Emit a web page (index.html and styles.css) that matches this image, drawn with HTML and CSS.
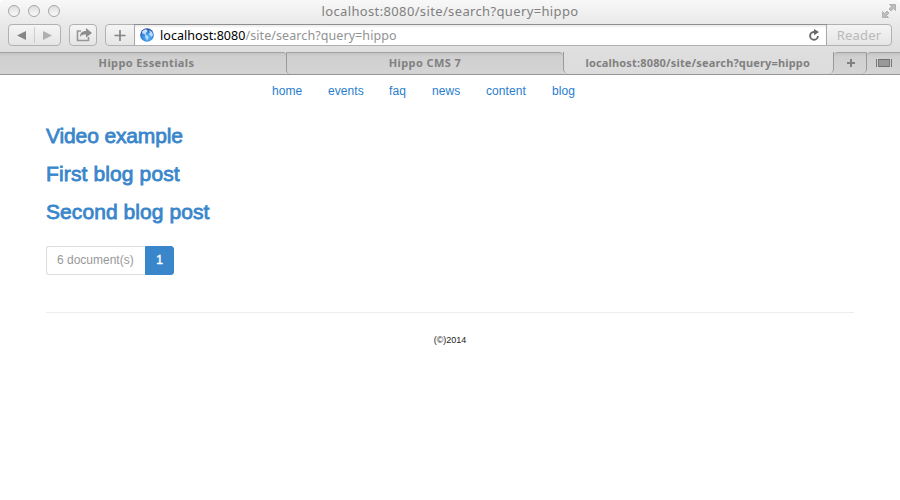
FILE: index.html
```
<!DOCTYPE html>
<html lang="en">
<head>
<meta charset="utf-8">
<title>localhost:8080/site/search?query=hippo</title>
<link rel="stylesheet" href="styles.css">
</head>
<body>
<header class="chrome">
  <div class="titlebar">
    <div class="lights"><i></i><i></i><i></i></div>
    <span class="title">localhost:8080/site/search?query=hippo</span>
    <svg class="expand" width="16" height="16" viewBox="0 0 16 16"><path d="M8.500 1.500h6v6l-2-2-2.500 2.500-2-2 2.500-2.500zM1.500 8.500l2 2L6 8l2 2-2.500 2.500 2 2h-6z" fill="#bcbcbc" stroke="#a8a8a8" stroke-width=".8"/></svg>
  </div>
  <div class="toolbar">
    <div class="btn nav">
      <svg width="51" height="20" viewBox="0 0 51 20"><path d="M17 6v9l-9-4.500z" fill="#858585"/><path d="M34 6v9l9-4.500z" fill="#b0b0b0"/><path d="M25.500 2v16" stroke="#cdcdcd"/></svg>
    </div>
    <div class="btn share">
      <svg width="26" height="20" viewBox="0 0 26 20"><path d="M11 6H7.500v9.500h11V12" fill="none" stroke="#969696" stroke-width="1.600"/><path d="M10 12c0-4 2-6 6-6V3l6 5-6 4.500V9.500c-3 0-5 .5-6 2.500z" fill="#8d8d8d"/></svg>
    </div>
    <div class="address">
      <div class="add"><svg width="26" height="20" viewBox="0 0 26 20"><path d="M14 5v11M8.500 10.500h11" stroke="#858585" stroke-width="1.700"/></svg></div>
      <div class="field">
        <svg class="globe" width="14" height="14" viewBox="0 0 14 14"><defs><radialGradient id="g" cx=".55" cy=".7" r=".65"><stop offset="0" stop-color="#62b8fa"/><stop offset=".65" stop-color="#3484df"/><stop offset="1" stop-color="#234ba5"/></radialGradient></defs><circle cx="7" cy="7" r="6.800" fill="url(#g)"/><path d="M2 3.500L5 1.300l2.500.7L7 4 5.500 5l1 1.500-1.500.3-1-1.300L2.500 6z" fill="#c7e3fb"/><path d="M5 7l3 .8L8.500 9.500 7 12.500 5.500 10zM9 2l3 2 1 3-1.500 2L10 7.500 8.500 6 10 4.500z" fill="#b5dcfa"/></svg>
        <span class="url"><b>localhost:8080</b>/site/search?query=hippo</span>
        <svg class="reload" width="12" height="13" viewBox="0 0 12 13"><path d="M7.500 3H5.800A3.900 3.900 0 1 0 9.900 7" fill="none" stroke="#686868" stroke-width="1.900"/><path d="M6 0l5 3-5 3.300z" fill="#686868"/></svg>
      </div>
      <div class="reader">Reader</div>
    </div>
  </div>
  <div class="tabs">
    <div class="tab first"><span>Hippo Essentials</span></div>
    <div class="tab second"><span>Hippo CMS 7</span></div>
    <div class="tab active"><span>localhost:8080/site/search?query=hippo</span></div>
    <div class="tab plus"><svg width="10" height="10" viewBox="0 0 10 10"><path d="M5 1v8M1 5h8" stroke="#808080" stroke-width="2"/></svg></div>
    <div class="tab all"><svg width="16" height="8" viewBox="0 0 16 8"><path d="M.5 0v8M15.500 0v8M2.500 0v8M13.500 0v8" stroke="#777"/><path d="M3 0h10v8H3z" fill="#999"/><path d="M3 .5h10M3 7.500h10" stroke="#707070"/></svg></div>
  </div>
</header>
<main class="page">
  <nav class="menu"><a class="home">home</a><a class="events">events</a><a class="faq">faq</a><a class="news">news</a><a class="content">content</a><a class="blog">blog</a></nav>
  <section class="results">
    <h3 class="r1">Video example</h3>
    <h3 class="r2">First blog post</h3>
    <h3 class="r3">Second blog post</h3>
  </section>
  <div class="pager"><span class="count">6 document(s)</span><span class="current">1</span></div>
  <footer class="footer">(©)2014</footer>
</main>
</body>
</html>
```
FILE: styles.css
```
* { box-sizing: border-box; }
body { margin: 0; width: 900px; height: 500px; overflow: hidden; background: #fff; font-family: "Liberation Sans", Arial, sans-serif; }
svg { display: block; flex: none; }
.chrome { height: 75px; background: linear-gradient(#f8f8f8, #e9e9e9 24px, #dedede 52px, #dcdcdc); border-radius: 4px 4px 0 0; font-family: "Noto Sans", sans-serif; }
.titlebar { height: 24px; display: grid; grid-template-columns: 100px 1fr 100px; align-items: center; }
.lights { display: flex; gap: 8px; padding-left: 8px; margin-top: -2px; }
.lights i { width: 12px; height: 12px; border: 1px solid #a6a6a6; border-radius: 50%; background: linear-gradient(#dedede, #fafafa); }
.title { text-align: center; font-size: 13px; line-height: 22px; margin-top: -2px; color: #808080; white-space: nowrap; letter-spacing: .36px; }
.expand { justify-self: end; margin-right: 3px; margin-top: -2px; }
.toolbar { height: 28px; display: flex; padding: 0 8px; gap: 8px; }
.btn { height: 22px; border: 1px solid #b1b1b1; border-radius: 4px; background: linear-gradient(#f5f5f5, #e5e5e5); }
.nav { width: 53px; }
.share { width: 28px; }
.address { flex: 1; height: 22px; display: flex; border: 1px solid #b1b1b1; border-radius: 4px; background: linear-gradient(#f5f5f5, #e5e5e5); }
.add { width: 28px; }
.field { flex: 1; display: flex; align-items: center; background: #fff; border: solid #aaa; border-width: 0 1px; padding: 0 6px 0 5px; box-shadow: 0 -1px #8e8e8e, inset 0 2px 2px #eee; }
.url { margin: 2px 0 0 6px; font-size: 12.500px; color: #929292; line-height: 20px; white-space: nowrap; letter-spacing: .08px; }
.url b { color: #000; font-weight: 400; letter-spacing: .05px; }
.reload { margin-left: auto; }
.reader { width: 64px; text-align: center; font-size: 13px; line-height: 20px; color: #bababa; letter-spacing: .2px; }
.tabs { height: 23px; display: flex; border-bottom: 1px solid #959595; }
.tab { height: 22px; display: flex; justify-content: center; align-items: center; padding-bottom: 2px; color: #808080; font-size: 11px; font-weight: 700; white-space: nowrap; background: linear-gradient(#c4c4c4, #d0d0d0 4px, #d4d4d4); border-top: 1px solid #a2a2a2; letter-spacing: .16px; }
.first { width: 286px; border-radius: 0 3px 0 0; padding-left: 7px; letter-spacing: .38px; }
.second { width: 277px; border-left: 1px solid #999; border-radius: 0 4px 0 4px; letter-spacing: .42px; }
.active { width: 271px; background: none; border-top: 0; border-left: 1px solid #999; border-right: 1px solid #999; border-radius: 0 0 5px 5px; padding: 0 23px 1px 0; justify-content: flex-end; }
.plus { width: 33px; border-right: 1px solid #999; border-radius: 4px 0 5px 0; padding-left: 2px; }
.all { flex: 1; border-radius: 4px 0 0 0; }
.page { padding: 0 46px; }
.menu { display: flex; padding: 8px 0 0 226px; font-size: 12px; line-height: 16px; color: #287dce; letter-spacing: .06px; }
.home { width: 56px; }
.events { width: 61px; }
.faq { width: 43px; }
.news { width: 54px; }
.content { width: 66px; }
.results { padding-top: 25px; }
h3 { margin: 0 0 14px; height: 24px; line-height: 24px; font-size: 21px; font-weight: 400; color: #3986cb; -webkit-text-stroke: .8px #3986cb; white-space: nowrap; }
.r1 { letter-spacing: -.13px; }
.r2 { letter-spacing: .13px; }
.r3 { letter-spacing: .07px; }
.pager { display: flex; height: 29px; margin-top: 22px; font-size: 12px; line-height: 27px; }
.count { width: 99px; border: 1px solid #ddd; border-right: 0; border-radius: 3px 0 0 3px; padding-left: 10px; color: #999; white-space: nowrap; }
.current { width: 29px; border: 1px solid #3986cb; border-radius: 0 3px 3px 0; background: #3986cb; color: #fff; text-align: center; -webkit-text-stroke: .4px #fff; }
.footer { margin-top: 37px; border-top: 1px solid #eee; padding-top: 21px; text-align: center; font-size: 9px; line-height: 12px; color: #222; }
```
